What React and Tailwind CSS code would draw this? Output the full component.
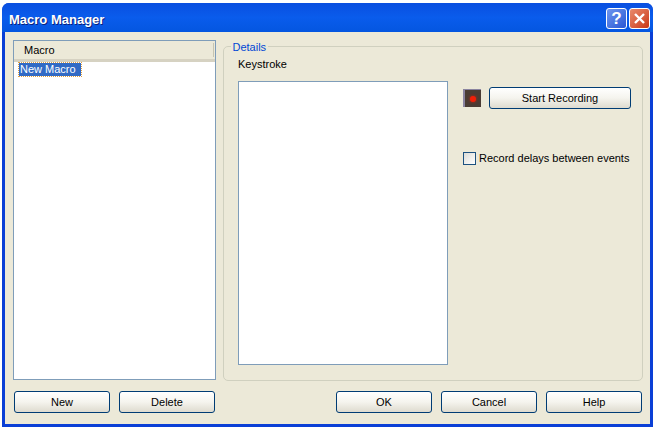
import React from 'react';

const XpButton = ({ className = '', children }) => (
  <button className={`h-[22px] pt-[1px] rounded-[3px] border border-[#003c74] bg-gradient-to-b from-white via-[#f5f4ee] to-[#dedbcf] text-[11px] text-black ${className}`}>
    {children}
  </button>
);

const App = () => {
  return (
    <div className="w-[659px] h-[430px] bg-white pl-[2px] pt-[3px] font-['Liberation_Sans',sans-serif]">
      <div className="w-[651px] h-[424px] flex flex-col rounded-t-[7px] bg-[#0a3fd6] overflow-hidden">
        {/* title bar */}
        <div className="h-[29px] shrink-0 flex items-center pl-[7px] pr-[3px] bg-gradient-to-b from-[#0a4fe0] via-[#0a5cec] to-[#0456e0]">
          <span className="flex-1 pt-[5px] text-white font-bold text-[13px] [text-shadow:1px_1px_0_#0a1f7a]">Macro Manager</span>
          <div className="flex gap-[2px] mt-[1px]">
            <div className="w-[21px] h-[21px] rounded-[3px] border border-white bg-gradient-to-br from-[#6f96ee] to-[#2a56d4] flex items-center justify-center text-white font-bold text-[17px] leading-none">?</div>
            <div className="w-[21px] h-[21px] rounded-[3px] border border-white bg-gradient-to-br from-[#e88a6c] to-[#c9340f] flex items-center justify-center">
              <svg width="13" height="13" viewBox="0 0 13 13">
                <path d="M2 2 L11 11 M11 2 L2 11" stroke="#fff" strokeWidth="2.4" />
              </svg>
            </div>
          </div>
        </div>

        {/* dialog body */}
        <div className="flex-1 mx-[3px] mb-[3px] bg-[#ece9d8] flex flex-col pl-[8px] pr-[6px] pt-[8px]">
          <div className="flex gap-[7px] h-[341px]">
            {/* macro list */}
            <div className="w-[203px] h-[340px] border border-[#7f9db9] bg-white flex flex-col">
              <div className="h-[21px] shrink-0 flex items-center pl-[10px] pt-[1px] bg-[#ece9d8] border-b-[3px] border-[#d6d2c2] text-[11px] text-black relative">
                Macro
                <span className="absolute right-[1px] top-[2px] bottom-[2px] w-px bg-[#c7c5b2]" />
              </div>
              <div className="flex pl-[5px] pt-[1px]">
                <span className="h-[13px] leading-[13px] pl-[1px] pr-[5px] bg-[#316ac5] text-white text-[11px] outline-1 outline-dotted outline-[#e0a040]">New Macro</span>
              </div>
            </div>

            {/* details group */}
            <div className="relative w-[420px] h-[335px] mt-[6px] rounded-[5px] border border-[#d0d0bf] pl-[14px] pt-[10px]">
              <span className="absolute left-[7px] -top-[6px] px-[1.5px] bg-[#ece9d8] text-[11px] leading-[12px] text-[#0046d5]">Details</span>
              <div className="text-[11px] leading-[14px] text-black">Keystroke</div>
              <div className="flex mt-[10px]">
                <div className="w-[210px] h-[284px] border border-[#7f9db9] bg-white" />
                <div className="ml-[15px] pt-[6px] flex flex-col">
                  <div className="flex items-center gap-[8px]">
                    <div className="w-[18px] h-[18px] bg-[#4a3c34] border-l-2 border-t border-[#8a84a0] flex items-center justify-center">
                      <div className="w-[6px] h-[6px] rounded-full bg-[#f02008] shadow-[0_0_3px_#d02010]" />
                    </div>
                    <XpButton className="w-[142px]">Start Recording</XpButton>
                  </div>
                  <div className="flex items-center gap-[3px] mt-[42px]">
                    <div className="w-[13px] h-[13px] border border-[#1c5180] bg-gradient-to-br from-[#dcdcd7] to-white" />
                    <span className="text-[11px] leading-[14px] text-black whitespace-nowrap">Record delays between events</span>
                  </div>
                </div>
              </div>
            </div>
          </div>

          {/* bottom buttons */}
          <div className="flex mt-[10px] pl-[1px]">
            <div className="flex gap-[9px]">
              <XpButton className="w-[96px]">New</XpButton>
              <XpButton className="w-[96px]">Delete</XpButton>
            </div>
            <div className="flex gap-[9px] ml-[121px]">
              <XpButton className="w-[96px]">OK</XpButton>
              <XpButton className="w-[96px]">Cancel</XpButton>
              <XpButton className="w-[96px]">Help</XpButton>
            </div>
          </div>
        </div>
      </div>
    </div>
  );
};

export default App;
